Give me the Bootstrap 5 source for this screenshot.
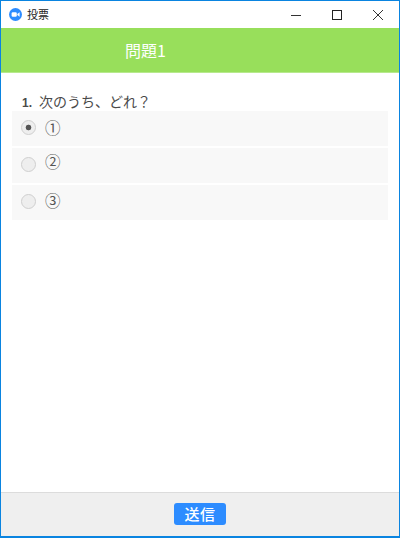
<!DOCTYPE html>
<html lang="ja">
<head>
<meta charset="utf-8">
<title>投票</title>
<link rel="stylesheet" href="https://cdn.jsdelivr.net/npm/bootstrap@5.3.0/dist/css/bootstrap.min.css">
<style>
html,body{height:100%;margin:0;background:#fff;overflow:hidden}
body{font-family:"Noto Sans CJK JP","Noto Sans",sans-serif;color:#444}
.win{height:538px;width:400px;border:1px solid #0a84e0;border-bottom-width:2px;background:#fff}
.titlebar{height:27px;padding-left:8px;font-size:11px;color:#222}
.applogo{width:13px;height:13px;margin-right:5px}
.winbtns{margin-left:auto;margin-right:1px}
.winbtn{width:41px;height:27px}
.headband{height:45px;background:#98df5b;color:#fff;font-size:16px;padding-left:124px;border-bottom:1px solid #b7e98d}
.qtitle{font-size:14px;line-height:18px;padding:19px 0 0 21px;color:#4a4a4a;height:38px}
.qnum{font-family:"Liberation Sans",sans-serif;font-weight:700;font-size:12px;margin-right:7px}
.optlist{padding:0 11px;gap:2px}
.optrow{height:35px;background:#f8f8f8;padding:0 0 2px 9px;font-size:15.5px;color:#555}
.radiodot{width:15px;height:15px;border-radius:50%;border:1.5px solid #cfcfcf;background:#eee;margin-right:9px;flex:none}
.radiodot.chosen{background:radial-gradient(circle,#555 0 2.5px,#eee 3.2px)}
.up2{margin-top:-6px}
.up1{margin-top:-1px}
.footband{height:44px;background:#efefef;border-top:1px solid #dcdcdc;padding-bottom:2px}
.sendbtn{width:52px;height:22px;padding:0;font-size:15px;line-height:20px;letter-spacing:.5px;background:#2d8cff;border:0;border-radius:3px;color:#fff;font-weight:500}
</style>
</head>
<body>
<div class="win d-flex flex-column">
  <div class="titlebar d-flex align-items-center">
    <svg class="applogo" viewBox="0 0 13 13"><circle cx="6.5" cy="6.5" r="6.5" fill="#2d8cff"/><rect x="2.6" y="4.2" width="5.2" height="4.6" rx="1.2" fill="#fff"/><path d="M8.3 5.9 10.6 4.3V8.7L8.3 7.1Z" fill="#fff"/></svg>
    <span>投票</span>
    <div class="winbtns d-flex">
      <div class="winbtn d-flex align-items-center justify-content-center"><svg width="10" height="10" viewBox="0 0 10 10"><path d="M0 5.5H10" stroke="#333" fill="none"/></svg></div>
      <div class="winbtn d-flex align-items-center justify-content-center"><svg width="10" height="10" viewBox="0 0 10 10"><rect x=".5" y=".5" width="9" height="9" stroke="#222" fill="none"/></svg></div>
      <div class="winbtn d-flex align-items-center justify-content-center"><svg width="10" height="10" viewBox="0 0 10 10"><path d="M0 0 10 10M10 0 0 10" stroke="#333" fill="none"/></svg></div>
    </div>
  </div>
  <div class="headband d-flex align-items-center">問題1</div>
  <div class="flex-grow-1">
    <div class="qtitle"><span class="qnum">1.</span>次のうち、どれ？</div>
    <div class="optlist d-flex flex-column">
      <div class="optrow d-flex align-items-center"><span class="radiodot chosen"></span><span>①</span></div>
      <div class="optrow d-flex align-items-center"><span class="radiodot"></span><span class="up2">②</span></div>
      <div class="optrow d-flex align-items-center"><span class="radiodot"></span><span class="up1">③</span></div>
    </div>
  </div>
  <div class="footband d-flex align-items-center justify-content-center">
    <button type="button" class="btn btn-primary sendbtn">送信</button>
  </div>
</div>
<script src="https://cdn.jsdelivr.net/npm/bootstrap@5.3.0/dist/js/bootstrap.bundle.min.js"></script>
</body>
</html>
